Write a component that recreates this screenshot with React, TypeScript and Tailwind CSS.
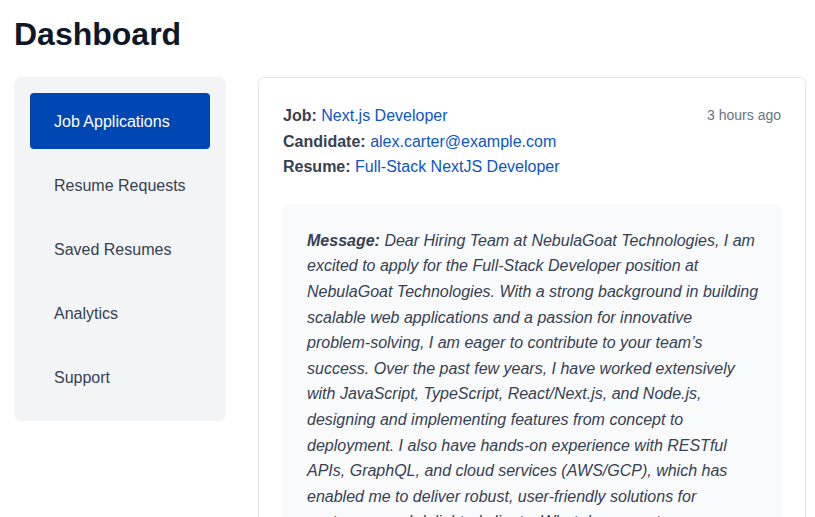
const navItems = ["Job Applications", "Resume Requests", "Saved Resumes", "Analytics", "Support"];

const message =
  "Dear Hiring Team at NebulaGoat Technologies, I am excited to apply for the Full-Stack Developer position at NebulaGoat Technologies. With a strong background in building scalable web applications and a passion for innovative problem-solving, I am eager to contribute to your team\u2019s success. Over the past few years, I have worked extensively with JavaScript, TypeScript, React/Next.js, and Node.js, designing and implementing features from concept to deployment. I also have hands-on experience with RESTful APIs, GraphQL, and cloud services (AWS/GCP), which has enabled me to deliver robust, user-friendly solutions for customers and delighted clients. What draws me to NebulaGoat Technologies is your commitment to building thoughtful products.";

export default function App() {
  return (
    <div className="min-h-screen bg-white pl-[14px] pr-[9px] font-['Liberation_Sans',Arial,sans-serif] text-gray-700">
      <h1 className="pt-[10px] pb-[19px] text-[32px] font-bold leading-[48px] text-gray-900">Dashboard</h1>

      <div className="flex items-start gap-8">
        <aside className="w-[212px] shrink-0 rounded-lg bg-gray-100 p-4">
          <nav className="flex flex-col gap-2">
            {navItems.map((item, i) => (
              <button
                key={item}
                type="button"
                className={
                  i === 0
                    ? "flex h-14 items-center rounded bg-[#0047b3] px-6 pt-[2px] text-left text-base text-white"
                    : "flex h-14 items-center rounded px-6 pt-[2px] text-left text-base text-gray-700"
                }
              >
                {item}
              </button>
            ))}
          </nav>
        </aside>

        <main className="min-w-0 flex-1 rounded-md border border-gray-200 bg-white px-6 pt-[25px] pb-6 text-base leading-[1.6]">
          <div className="flex items-start justify-between">
            <div>
              <p>
                <span className="font-bold">Job:</span> <a className="text-[#0b55c9]">Next.js Developer</a>
              </p>
              <p>
                <span className="font-bold">Candidate:</span>{" "}
                <a className="text-[#0b55c9]">alex.carter@example.com</a>
              </p>
              <p>
                <span className="font-bold">Resume:</span>{" "}
                <a className="text-[#0b55c9]">Full-Stack NextJS Developer</a>
              </p>
            </div>
            <span className="pt-[2px] text-sm text-gray-500">3 hours ago</span>
          </div>

          <div className="mt-6 rounded-md bg-gray-50 py-6 pl-6 pr-[22.5px]">
            <p className="italic">
              <span className="font-bold">Message:</span> {message}
            </p>
          </div>
        </main>
      </div>
    </div>
  );
}
